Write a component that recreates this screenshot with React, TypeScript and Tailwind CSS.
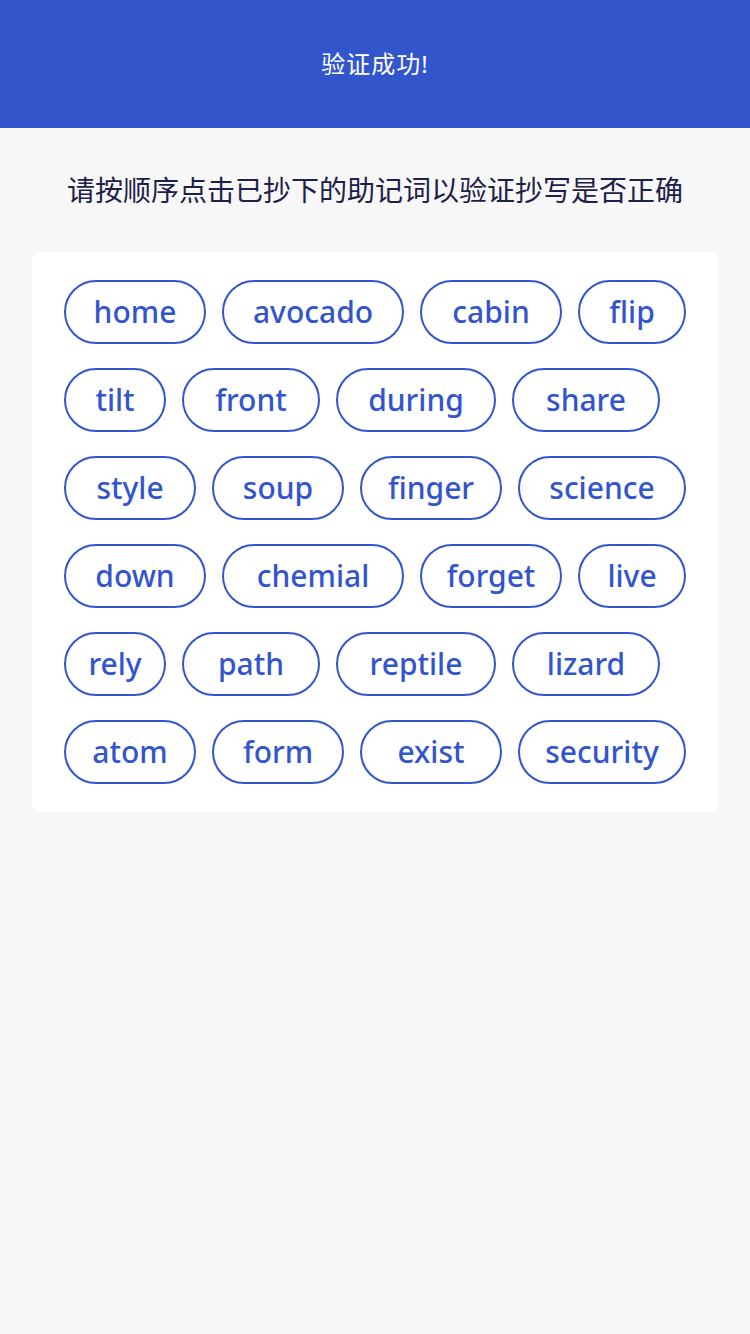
const WORDS: { w: string; cls: string }[] = [
  { w: 'home', cls: 'w-[142px]' },
  { w: 'avocado', cls: 'w-[182px]' },
  { w: 'cabin', cls: 'w-[142px]' },
  { w: 'flip', cls: 'w-[108px]' },
  { w: 'tilt', cls: 'w-[102px]' },
  { w: 'front', cls: 'w-[138px]' },
  { w: 'during', cls: 'w-[160px]' },
  { w: 'share', cls: 'w-[148px]' },
  { w: 'style', cls: 'w-[132px]' },
  { w: 'soup', cls: 'w-[132px]' },
  { w: 'finger', cls: 'w-[142px]' },
  { w: 'science', cls: 'w-[168px]' },
  { w: 'down', cls: 'w-[142px]' },
  { w: 'chemial', cls: 'w-[182px]' },
  { w: 'forget', cls: 'w-[142px]' },
  { w: 'live', cls: 'w-[108px]' },
  { w: 'rely', cls: 'w-[102px]' },
  { w: 'path', cls: 'w-[138px]' },
  { w: 'reptile', cls: 'w-[160px]' },
  { w: 'lizard', cls: 'w-[148px]' },
  { w: 'atom', cls: 'w-[132px]' },
  { w: 'form', cls: 'w-[132px]' },
  { w: 'exist', cls: 'w-[142px]' },
  { w: 'security', cls: 'w-[168px]' },
];

export default function App() {
  return (
    <div className="min-h-[1334px] bg-[#f7f7f7] font-['Noto_Sans','Noto_Sans_CJK_SC',sans-serif]">
      <header className="h-32 bg-[#3355cc] flex items-center justify-center">
        <h1 className="text-[24px] text-white tracking-[1px]">验证成功!</h1>
      </header>

      <p className="h-[124px] flex items-center justify-center text-[28px] text-[#1d2048]">
        请按顺序点击已抄下的助记词以验证抄写是否正确
      </p>

      <div className="mx-8 bg-white rounded-lg px-8 py-7">
        <div className="flex flex-wrap gap-x-4 gap-y-6">
          {WORDS.map((item) => (
            <button
              key={item.w}
              className={`${item.cls} h-16 rounded-full border-2 border-[#3355cc] text-[#3355cc] text-[30px] font-medium leading-none flex items-center justify-center`}
            >
              {item.w}
            </button>
          ))}
        </div>
      </div>
    </div>
  );
}
